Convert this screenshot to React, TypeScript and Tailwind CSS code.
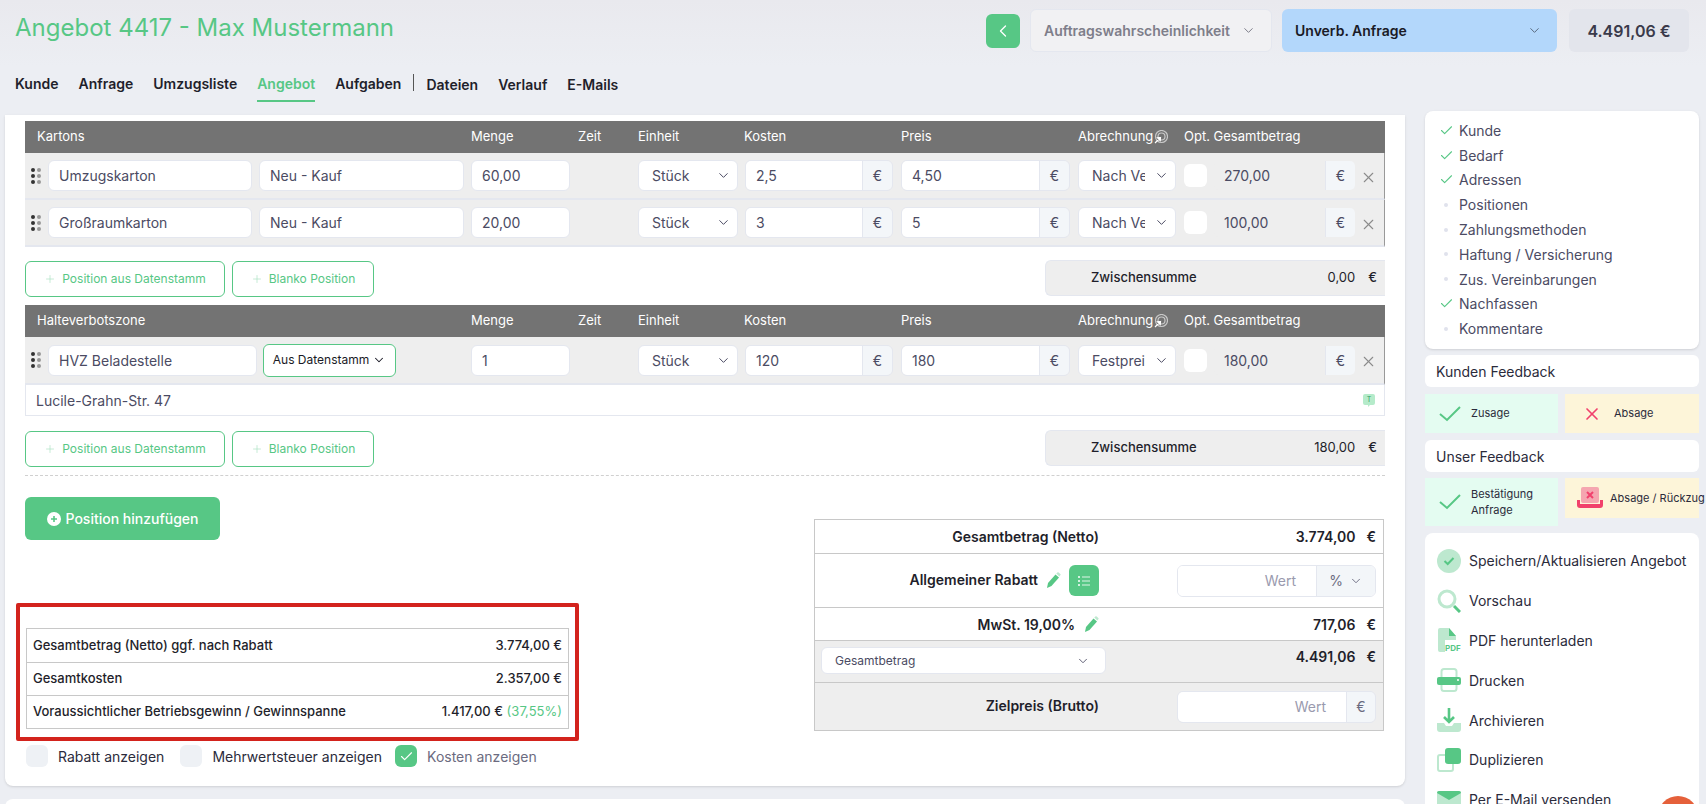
import { Check, ChevronDown, ChevronLeft, Plus, X } from 'lucide-react';

const GREEN = 'text-[#57c785]';

function Field({ text, className = '' }: { text: string; className?: string }) {
  return (
    <div className={`h-[31px] bg-white border border-[#e4e7ef] rounded-md pl-[10px] flex items-center text-[14px] text-[#4b4b63] overflow-hidden whitespace-nowrap ${className}`}>
      {text}
    </div>
  );
}

function Select({ text, className = '', textWidth }: { text: string; className?: string; textWidth: string }) {
  return (
    <div className={`h-[31px] bg-white border border-[#e4e7ef] rounded-md pl-[13px] pr-[6px] flex items-center justify-between text-[14px] text-[#4b4b63] whitespace-nowrap ${className}`}>
      <span className={`overflow-hidden ${textWidth}`}>{text}</span>
      <ChevronDown size={15} strokeWidth={1.6} className="shrink-0" />
    </div>
  );
}

function Money({ text, total, className = '', muted }: { text: string; total: string; className?: string; muted?: boolean }) {
  return (
    <div className={`h-[31px] flex border border-[#e4e7ef] rounded-md overflow-hidden ${total} ${className}`}>
      <div className={`flex-1 pl-[10px] flex items-center text-[14px] text-[#4b4b63] ${muted ? 'bg-[#eeeeee]' : 'bg-white'}`}>{text}</div>
      <div className="w-[30px] bg-[#f3f6f9] border-l border-[#e4e7ef] flex items-center justify-center text-[14px] text-[#4b4b63]">€</div>
    </div>
  );
}

function Grip() {
  return (
    <div className="w-[10px] ml-[6px] mr-[7px] grid grid-cols-2 gap-x-[2px] gap-y-[2px] shrink-0">
      <span className="size-[4px] rounded-full bg-[#333]" />
      <span className="size-[4px] rounded-full bg-[#999]" />
      <span className="size-[4px] rounded-full bg-[#333]" />
      <span className="size-[4px] rounded-full bg-[#999]" />
      <span className="size-[4px] rounded-full bg-[#333]" />
      <span className="size-[4px] rounded-full bg-[#999]" />
    </div>
  );
}

function TargetIcon() {
  return (
    <svg width="14" height="14" viewBox="0 0 14 14" fill="none" className="ml-[1px]">
      <circle cx="7.5" cy="6.5" r="6" stroke="#c9c9c9" strokeWidth="1.2" />
      <circle cx="7.5" cy="6.5" r="3.5" stroke="#c9c9c9" strokeWidth="1.2" />
      <path d="M1 13l5-5M6.5 7.5l-3 .3 2.7 2.7z" stroke="#fff" strokeWidth="1.2" fill="#fff" />
    </svg>
  );
}

function TableHead({ title }: { title: string }) {
  return (
    <div className="h-[32px] bg-[#737373] flex items-center text-[13px] text-white whitespace-nowrap">
      <div className="w-[446px] pl-[12px]">{title}</div>
      <div className="w-[107px]">Menge</div>
      <div className="w-[60px]">Zeit</div>
      <div className="w-[106px]">Einheit</div>
      <div className="w-[157px]">Kosten</div>
      <div className="w-[177px]">Preis</div>
      <div className="w-[106px] flex items-center">Abrechnung<TargetIcon /></div>
      <div>Opt. Gesamtbetrag</div>
    </div>
  );
}

function PositionCells({ menge, kosten, preis, abr, total }: { menge: string; kosten: string; preis: string; abr: string; total: string }) {
  return (
    <>
      <Field text={menge} className="w-[99px] ml-[7px]" />
      <Select text="Stück" textWidth="" className="w-[100px] ml-[68px]" />
      <Money text={kosten} total="w-[148px]" className="ml-[7px]" />
      <Money text={preis} total="w-[169px]" className="ml-[8px]" />
      <Select text={abr} textWidth="w-[53px]" className="w-[98px] ml-[8px]" />
      <div className="size-[23px] bg-white rounded-md ml-[8px] shrink-0" />
      <Money text={total} total="w-[143px]" muted className="ml-[6px] border-transparent" />
      <X size={17} strokeWidth={1.5} className="text-[#8b8b8b] ml-[4px] mt-[3px] shrink-0" />
    </>
  );
}

function ItemRow({ name, menge, kosten, preis, abr, total }: { name: string; menge: string; kosten: string; preis: string; abr: string; total: string }) {
  return (
    <div className="h-[47px] bg-[#eeeeee] border-b-2 border-[#e4e7ef] border-r border-r-[#999] flex items-center">
      <Grip />
      <Field text={name} className="w-[204px]" />
      <Field text="Neu - Kauf" className="w-[205px] ml-[7px]" />
      <PositionCells menge={menge} kosten={kosten} preis={preis} abr={abr} total={total} />
    </div>
  );
}

function AddRow({ sum, className = '' }: { sum: string; className?: string }) {
  return (
    <div className={`flex items-start justify-between ${className}`}>
      <div className="flex gap-[7px] mt-[1px]">
        <AddButton label="Position aus Datenstamm" className="w-[200px]" />
        <AddButton label="Blanko Position" className="w-[142px]" />
      </div>
      <div className="w-[340px] h-[36px] bg-[#eeeeee] border border-[#e4e7ef] border-r-0 rounded-l-md flex items-center text-[13px] font-medium text-[#1f1f2b]">
        <span className="ml-[45px] flex-1">Zwischensumme</span>
        <span className="font-normal">{sum}</span>
        <span className="ml-[13px] mr-[8px] font-medium">€</span>
      </div>
    </div>
  );
}

function AddButton({ label, className }: { label: string; className: string }) {
  return (
    <div className={`h-[36px] border border-[#57c785] rounded-md flex items-center justify-center gap-[6px] text-[12px] text-[#57c785] whitespace-nowrap ${className}`}>
      <Plus size={12} strokeWidth={1.3} className="text-[#a8e0bf]" />
      {label}
    </div>
  );
}

function Pencil() {
  return (
    <svg width="15" height="17" viewBox="0 0 15 17" className="shrink-0">
      <path d="M1 16l1-5 7.5-8.5 3.5 3L5.5 14z" fill="#57c785" />
      <path d="M10.3 1.6l1-1.1a1 1 0 011.4 0l1.6 1.4a1 1 0 010 1.4l-1 1.1z" fill="#bde8cf" />
    </svg>
  );
}

function TotalRow({ children, className = '' }: { children: React.ReactNode; className?: string }) {
  return <div className={`flex border-b border-[#c8c8c8] last:border-b-0 ${className}`}>{children}</div>;
}

function Amount({ v }: { v: string }) {
  return (
    <div className="flex text-[14px] font-semibold text-[#1f1f2b]">
      <span>{v}</span>
      <span className="ml-[11px]">€</span>
    </div>
  );
}

function TotalsTable() {
  return (
    <div className="w-[570px] border border-[#c8c8c8] text-[14px] font-semibold text-[#1f1f2b] whitespace-nowrap">
      <TotalRow className="h-[34px] items-center pl-[6px] pr-[7px] justify-between">
        <span className="w-[278px] text-right">Gesamtbetrag (Netto)</span>
        <Amount v="3.774,00" />
      </TotalRow>
      <TotalRow className="h-[54px] items-center pr-[7px]">
        <div className="w-[284px] flex items-center justify-end gap-[8px]">
          <span className="-mt-[2px]">Allgemeiner Rabatt</span>
          <Pencil />
          <div className="size-[31px] w-[30px] bg-[#57c785] rounded-md flex items-center justify-center">
            <svg width="12" height="12" viewBox="0 0 12 12" fill="none" stroke="#dff5e8" strokeWidth="1.2">
              <path d="M4 2h8M4 6h8M4 10h8" />
              <path d="M0 2h2M0 6h2M0 10h2" stroke="#fff" strokeWidth="1.6" />
            </svg>
          </div>
        </div>
        <div className="ml-auto w-[199px] h-[32px] flex border border-[#e4e7ef] rounded-md overflow-hidden font-normal">
          <div className="flex-1 bg-white flex items-center justify-end pr-[20px] text-[#9a9aae]">Wert</div>
          <div className="w-[59px] bg-[#f3f6f9] border-l border-[#e4e7ef] flex items-center justify-center gap-[6px] text-[#6b6b80]">
            % <ChevronDown size={14} strokeWidth={1.6} />
          </div>
        </div>
      </TotalRow>
      <TotalRow className="h-[33px] items-center pr-[7px] justify-between">
        <div className="w-[284px] flex items-center justify-end gap-[9px]">
          <span>MwSt. 19,00%</span>
          <Pencil />
        </div>
        <Amount v="717,06" />
      </TotalRow>
      <TotalRow className="h-[42px] bg-[#eeeeee] pl-[6px] pr-[7px] justify-between">
        <div className="w-[285px] h-[27px] mt-[6px] bg-white border border-[#e4e7ef] rounded-md pl-[13px] pr-[15px] flex items-center justify-between text-[12px] font-normal text-[#4b4b63]">
          Gesamtbetrag
          <ChevronDown size={14} strokeWidth={1.5} />
        </div>
        <div className="mt-[5px]"><Amount v="4.491,06" /></div>
      </TotalRow>
      <TotalRow className="h-[47px] bg-[#eeeeee] items-center pr-[7px]">
        <span className="w-[284px] text-right -mt-[2px]">Zielpreis (Brutto)</span>
        <div className="ml-auto w-[199px] h-[32px] flex border border-[#e4e7ef] rounded-md overflow-hidden font-normal">
          <div className="flex-1 bg-white flex items-center justify-end pr-[20px] text-[#9a9aae]">Wert</div>
          <div className="w-[29px] bg-[#f3f6f9] border-l border-[#e4e7ef] flex items-center justify-center text-[#6b6b80]">€</div>
        </div>
      </TotalRow>
    </div>
  );
}

function ProfitBox() {
  const rows = [
    ['Gesamtbetrag (Netto) ggf. nach Rabatt', '3.774,00 €'],
    ['Gesamtkosten', '2.357,00 €'],
    ['Voraussichtlicher Betriebsgewinn / Gewinnspanne', '1.417,00 €'],
  ];
  return (
    <div className="-ml-[9px] w-[563px] h-[138px] border-[4px] border-[#d3231d] rounded-[2px] pt-[21px] px-[6px]">
      <div className="border border-[#c8c8c8] text-[13px] font-medium text-[#1f1f2b] whitespace-nowrap">
        {rows.map(([label, value], i) => (
          <div key={label} className={`h-[33px] flex items-center justify-between px-[6px] ${i > 0 ? 'border-t border-[#c8c8c8]' : ''}`}>
            <span>{label}</span>
            <span>
              {value}
              {i === 2 && <span className={`font-normal ${GREEN}`}> (37,55%)</span>}
            </span>
          </div>
        ))}
      </div>
    </div>
  );
}

function Toggle({ label, on, className = '' }: { label: string; on?: boolean; className?: string }) {
  return (
    <div className={`flex items-center gap-[10px] text-[14px] whitespace-nowrap ${on ? 'text-[#6b6b80]' : 'text-[#2b2b3b]'} ${className}`}>
      <div className={`w-[22px] h-[22px] rounded-md flex items-center justify-center ${on ? 'bg-[#57c785]' : 'bg-[#eef1f5]'}`}>
        {on && <Check size={15} strokeWidth={1.8} className="text-white" />}
      </div>
      {label}
    </div>
  );
}

const CHECKLIST: [string, boolean][] = [
  ['Kunde', true],
  ['Bedarf', true],
  ['Adressen', true],
  ['Positionen', false],
  ['Zahlungsmethoden', false],
  ['Haftung / Versicherung', false],
  ['Zus. Vereinbarungen', false],
  ['Nachfassen', true],
  ['Kommentare', false],
];

function BigCheck() {
  return (
    <svg width="24" height="18" viewBox="0 0 24 18" fill="none" stroke="#57c785" strokeWidth="2" className="shrink-0">
      <path d="M2 9l7 6L22 2" />
    </svg>
  );
}

function Sidebar() {
  return (
    <div className="w-[274px] shrink-0 ml-[20px] flex flex-col">
      <div className="h-[238px] bg-white rounded-lg pt-[7px] pl-[13px] shadow-sm">
        {CHECKLIST.map(([label, done]) => (
          <div key={label} className="h-[24.8px] flex items-center text-[14px] text-[#4b4b63]">
            <div className="w-[21px] flex items-center justify-center mr-[0px]">
              {done ? <Check size={15} strokeWidth={1.7} className="text-[#57c785] -ml-[5px]" /> : <span className="size-[4px] rounded-full bg-[#e0e2ec] -ml-[5px]" />}
            </div>
            {label}
          </div>
        ))}
      </div>

      <div className="h-[32px] mt-[6px] bg-white rounded-md flex items-center pl-[11px] text-[14px] text-[#2b2b3b]">Kunden Feedback</div>
      <div className="flex gap-[7px] mt-[7px] text-[11px] text-[#2b2b3b]">
        <div className="w-[133px] h-[39px] bg-[#e4fcf1] flex items-center pl-[13px] gap-[9px]"><BigCheck />Zusage</div>
        <div className="w-[134px] h-[39px] bg-[#fdf5d9] flex items-center pl-[17px] gap-[12px]">
          <X size={20} strokeWidth={2} className="text-[#f1416c]" />Absage
        </div>
      </div>

      <div className="h-[32px] mt-[7px] bg-white rounded-md flex items-center pl-[11px] text-[14px] text-[#2b2b3b]">Unser Feedback</div>
      <div className="flex gap-[7px] mt-[6px] items-start text-[11px] text-[#2b2b3b]">
        <div className="w-[133px] h-[48px] bg-[#e4fcf1] flex items-center pl-[13px] gap-[9px] leading-[16px]"><BigCheck /><span>Bestätigung<br />Anfrage</span></div>
        <div className="w-[134px] h-[40px] bg-[#fdf5d9] flex items-center pl-[11px] gap-[6px] whitespace-nowrap">
          <svg width="28" height="22" viewBox="0 0 28 22" className="shrink-0">
            <rect x="5" y="0" width="18" height="16" rx="2" fill="#f5a6b0" />
            <path d="M11 5l6 6M17 5l-6 6" stroke="#f1416c" strokeWidth="2" />
            <path d="M1 13v5a3 3 0 003 3h20a3 3 0 003-3v-5h-3v4H4v-4z" fill="#f1416c" />
          </svg>
          Absage / Rückzug
        </div>
      </div>

      <div className="h-[280px] mt-[7px] bg-white rounded-lg pt-[8px] pl-[12px] text-[14px] text-[#2b2b3b] whitespace-nowrap">
        <Action label="Speichern/Aktualisieren Angebot">
          <circle cx="12" cy="12" r="12" fill="#bde8cf" />
          <path d="M7.5 12l3.2 3 5.8-6" fill="none" stroke="#57c785" strokeWidth="2" />
        </Action>
        <Action label="Vorschau">
          <circle cx="10" cy="10" r="8" fill="none" stroke="#bde8cf" strokeWidth="3" />
          <path d="M17 17l6 6" stroke="#57c785" strokeWidth="3" />
        </Action>
        <Action label="PDF herunterladen">
          <path d="M3 0h9l7 8v4H8v12H3a2 2 0 01-2-2V2a2 2 0 012-2z" fill="#bde8cf" />
          <path d="M12 0l7 8h-7z" fill="#57c785" />
          <text x="8" y="23" fontSize="8" fontWeight="700" fill="#57c785" fontFamily="Inter, sans-serif">PDF</text>
        </Action>
        <Action label="Drucken">
          <rect x="4.5" y="1" width="15" height="22" rx="2.5" fill="#fff" stroke="#bde8cf" strokeWidth="2" />
          <rect x="0" y="9" width="24" height="8" rx="2" fill="#57c785" />
          <circle cx="21" cy="12" r="1" fill="#fff" />
        </Action>
        <Action label="Archivieren">
          <path d="M0 15h7l2 3h6l2-3h7v6a3 3 0 01-3 3H3a3 3 0 01-3-3z" fill="#bde8cf" />
          <path d="M12 0v13M7 9l5 5 5-5" fill="none" stroke="#57c785" strokeWidth="2.6" />
        </Action>
        <Action label="Duplizieren">
          <rect x="1" y="7" width="15" height="16" rx="2" fill="#fff" stroke="#bde8cf" strokeWidth="2" />
          <rect x="8" y="0" width="16" height="16" rx="3" fill="#57c785" />
        </Action>
        <Action label="Per E-Mail versenden">
          <rect x="0" y="3" width="24" height="18" rx="2" fill="#bde8cf" />
          <path d="M0 5a2 2 0 012-2h20a2 2 0 012 2l-12 7z" fill="#57c785" />
        </Action>
      </div>
    </div>
  );
}

function Action({ label, children }: { label: string; children: React.ReactNode }) {
  return (
    <div className="h-[39.8px] flex items-center gap-[8px]">
      <svg width="24" height="24" viewBox="0 0 24 24" className="shrink-0">{children}</svg>
      {label}
    </div>
  );
}

export default function App() {
  const tabs = ['Kunde', 'Anfrage', 'Umzugsliste', 'Angebot', 'Aufgaben'];
  const tabsAfter = ['Dateien', 'Verlauf', 'E-Mails'];

  return (
    <div className="relative h-[804px] overflow-hidden bg-[#eceef3] font-['Inter',sans-serif]">
      {/* Title bar */}
      <div className="h-[66px] pt-[9px] pl-[15px] pr-[17px] flex items-start bg-gradient-to-b from-[#e9e9ee] to-[#eceef3]">
        <h1 className={`text-[24px] leading-[38px] font-normal ${GREEN}`}>Angebot 4417 - Max Mustermann</h1>
        <div className="ml-auto flex items-start">
          <div className="w-[34px] h-[34px] mt-[5px] bg-[#57c785] rounded-md flex items-center justify-center">
            <ChevronLeft size={20} strokeWidth={1.6} className="text-white" />
          </div>
          <div className="w-[242px] h-[43px] ml-[10px] bg-[#f1f1f3] border border-[#e4e7ef] rounded-md pl-[13px] pr-[15px] flex items-center justify-between text-[14px] font-semibold text-[#7e7e8a]">
            Auftragswahrscheinlichkeit
            <ChevronDown size={15} strokeWidth={1.6} />
          </div>
          <div className="w-[275px] h-[43px] ml-[10px] bg-[#b3d7fb] rounded-md pl-[13px] pr-[15px] flex items-center justify-between text-[14px] font-semibold text-[#1a1a26]">
            Unverb. Anfrage
            <ChevronDown size={15} strokeWidth={1.6} className="text-[#5a6b80]" />
          </div>
          <div className="w-[120px] h-[43px] ml-[12px] bg-[#e3e5ec] rounded-md flex items-center justify-center text-[16px] font-semibold text-[#3a3a4a]">
            4.491,06 €
          </div>
        </div>
      </div>

      {/* Tabs */}
      <div className="h-[45px] pl-[15px] flex items-start gap-[20px] text-[14px] font-semibold text-[#1f1f2b] whitespace-nowrap">
        {tabs.map((t) => (
          <div key={t} className={`h-[36px] flex items-center border-b-2 mt-[0px] ${t === 'Angebot' ? 'text-[#57c785] border-[#57c785]' : 'border-transparent'}`}>
            {t}
          </div>
        ))}
        <div className="w-[1px] h-[17px] bg-[#555] mt-[8px] -mx-[8px]" />
        {tabsAfter.map((t) => (
          <div key={t} className="h-[36px] flex items-center">{t}</div>
        ))}
      </div>

      <div className="flex pl-[5px]">
        {/* Main panel */}
        <div className="w-[1400px] shrink-0">
          <div className="mt-[4px] h-[671px] bg-white rounded-b-lg pt-[6px] pl-[20px] pr-[20px] shadow-sm">
            <TableHead title="Kartons" />
            <ItemRow name="Umzugskarton" menge="60,00" kosten="2,5" preis="4,50" abr="Nach Verbrauch" total="270,00" />
            <ItemRow name="Großraumkarton" menge="20,00" kosten="3" preis="5" abr="Nach Verbrauch" total="100,00" />
            <AddRow sum="0,00" className="mt-[13px]" />
            <div className="mt-[8px]"><TableHead title="Halteverbotszone" /></div>
            <div className="h-[48px] bg-[#eeeeee] border-b-2 border-[#e4e7ef] border-r border-r-[#999] flex items-center">
              <Grip />
              <Field text="HVZ Beladestelle" className="w-[209px]" />
              <div className="w-[133px] h-[33px] ml-[6px] border border-[#57c785] bg-white rounded-md flex items-center justify-center gap-[3px] text-[12px] text-[#1a1a26] whitespace-nowrap shrink-0">
                Aus Datenstamm <ChevronDown size={14} strokeWidth={1.8} />
              </div>
              <Field text="1" className="w-[99px] ml-[75px]" />
              <PositionCellsNoMenge />
            </div>
            <div className="h-[31px] mt-[0px] border border-t-0 border-[#e4e7ef] flex items-center justify-between pl-[10px] pr-[9px] text-[14px] text-[#4b4b63]">
              Lucile-Grahn-Str. 47
              <svg width="12" height="13" viewBox="0 0 12 13">
                <path d="M2 0h8a2 2 0 012 2v7a2 2 0 01-2 2H7l-2 2v-2H2a2 2 0 01-2-2V2a2 2 0 012-2z" fill="#b5ebca" />
                <text x="6" y="8" fontSize="7" textAnchor="middle" fill="#2f9e63" fontFamily="Inter, sans-serif">T</text>
              </svg>
            </div>
            <AddRow sum="180,00" className="mt-[14px]" />
            <div className="mt-[8px] border-t border-dashed border-[#d0d0d0]" />

            <div className="flex justify-between">
              <div className="mt-[21px]">
                <div className="w-[195px] h-[43px] bg-[#57c785] rounded-md flex items-center justify-center gap-[5px] text-[14px] font-medium text-white">
                  <svg width="14" height="14" viewBox="0 0 14 14">
                    <circle cx="7" cy="7" r="7" fill="#fff" />
                    <path d="M7 4v6M4 7h6" stroke="#57c785" strokeWidth="1.6" />
                  </svg>
                  Position hinzufügen
                </div>
                <div className="mt-[63px]"><ProfitBox /></div>
                <div className="flex mt-[4px] ml-[1px]">
                  <Toggle label="Rabatt anzeigen" />
                  <Toggle label="Mehrwertsteuer anzeigen" className="ml-[16px]" />
                  <Toggle label="Kosten anzeigen" on className="ml-[13px]" />
                </div>
              </div>
              <div className="mt-[43px] mr-[1px]"><TotalsTable /></div>
            </div>
          </div>
          <div className="mt-[13px] h-[20px] bg-white rounded-t-lg" />
        </div>

        <Sidebar />
      </div>

      {/* Chat launcher, cut off by the window edge */}
      <div className="absolute left-[1658px] top-[796px] size-[40px] rounded-full bg-[#e5603a]" />
    </div>
  );
}

function PositionCellsNoMenge() {
  return (
    <>
      <Select text="Stück" textWidth="" className="w-[100px] ml-[68px]" />
      <Money text="120" total="w-[148px]" className="ml-[7px]" />
      <Money text="180" total="w-[169px]" className="ml-[8px]" />
      <Select text="Festpreis" textWidth="w-[53px]" className="w-[98px] ml-[8px]" />
      <div className="size-[23px] bg-white rounded-md ml-[8px] shrink-0" />
      <Money text="180,00" total="w-[143px]" muted className="ml-[6px] border-transparent" />
      <X size={17} strokeWidth={1.5} className="text-[#8b8b8b] ml-[4px] mt-[3px] shrink-0" />
    </>
  );
}
